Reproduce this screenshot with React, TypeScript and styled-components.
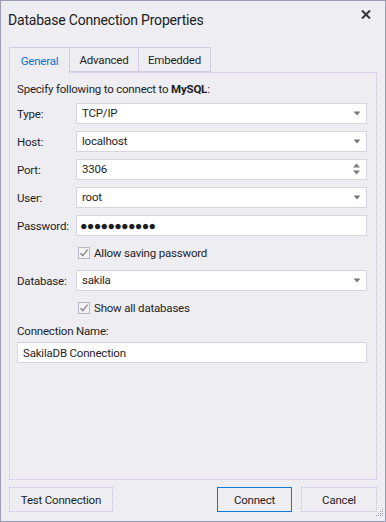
import { FC, ReactNode } from "react";
import styled, { createGlobalStyle } from "styled-components";

const Global = createGlobalStyle`
  html, body {
    margin: 0;
    padding: 0;
    background: #eeedf2;
  }
  body {
    font-family: Roboto, "Noto Sans", sans-serif;
    font-size: 11.5px;
    letter-spacing: -0.2px;
    color: #1e1e1e;
  }
`;

const Window = styled.div`
  width: 386px;
  height: 522px;
  box-sizing: border-box;
  border: 1px solid #9c9cb8;
  background: #eeedf2;
  display: flex;
  flex-direction: column;
  position: relative;
`;

const TitleBar = styled.div`
  height: 46px;
  display: flex;
  justify-content: space-between;
  align-items: flex-start;
  padding: 11px 14px 0 7px;
  box-sizing: border-box;

  h1 {
    margin: 0;
    font-size: 14px;
    font-weight: 400;
    color: #202020;
  }
`;

const Close = styled.button`
  border: 0;
  background: none;
  padding: 0;
  margin-top: -2px;
  width: 10px;
  height: 9px;
  display: flex;
  cursor: pointer;
`;

const Tabs = styled.div`
  display: flex;
  padding-left: 8px;
  height: 26px;
  box-sizing: border-box;
  position: relative;
  z-index: 1;
`;

const Tab = styled.div<{ $active?: boolean; $w: number }>`
  width: ${({ $w }) => $w}px;
  box-sizing: border-box;
  display: flex;
  align-items: center;
  justify-content: center;
  border: 1px solid #d3cbe0;
  border-left-width: ${({ $active }) => ($active ? "1px" : "0")};
  border-bottom-color: ${({ $active }) => ($active ? "#eeedf2" : "#d3cbe0")};
  background: #eeedf2;
  color: ${({ $active }) => ($active ? "#0a73cf" : "#1e1e1e")};
  height: ${({ $active }) => ($active ? "26px" : "25px")};
  padding-top: 1px;
`;

const Panel = styled.div`
  margin: -1px 8px 0 8px;
  height: 408px;
  box-sizing: border-box;
  border: 1px dotted #c9bfd8;
  padding: 7px 9px 0 7px;
  display: flex;
  flex-direction: column;
`;

const Intro = styled.div`
  height: 19px;
  line-height: 18px;
  b {
    font-weight: 700;
  }
`;

const Row = styled.div`
  display: grid;
  grid-template-columns: 59px 1fr;
  align-items: center;
  height: 28px;
`;

const Label = styled.label`
  padding-top: 2px;
`;

const Field = styled.div`
  height: 21px;
  box-sizing: border-box;
  border: 1px solid #d7d3e0;
  background: #ffffff;
  display: flex;
  align-items: center;
  padding: 0 5px 0 5px;
`;

const FieldText = styled.span<{ $dots?: boolean }>`
  flex: 1;
  letter-spacing: ${({ $dots }) => ($dots ? "-0.7px" : "-0.2px")};
  font-size: ${({ $dots }) => ($dots ? "12.5px" : "11.5px")};
  margin-left: ${({ $dots }) => ($dots ? "-2px" : "0")};
`;

const CheckRow = styled.div`
  display: flex;
  align-items: center;
  gap: 4px;
  padding-left: 61px;
  height: 27px;
`;

const Box = styled.span`
  width: 12px;
  height: 12px;
  box-sizing: border-box;
  border: 1px solid #b8b8c4;
  background: #f4f4f7;
  display: flex;
  align-items: center;
  justify-content: center;
`;

const NameLabel = styled.div`
  margin-top: 3px;
  height: 18px;
`;

const Footer = styled.div`
  display: flex;
  align-items: center;
  padding: 7px 8px 0 8px;
  gap: 9px;
`;

const Button = styled.button<{ $primary?: boolean; $w: number }>`
  width: ${({ $w }) => $w}px;
  height: 25px;
  box-sizing: border-box;
  font-family: inherit;
  font-size: 11.5px;
  letter-spacing: -0.2px;
  color: #1e1e1e;
  background: #eeedf2;
  border: 1px ${({ $primary }) => ($primary ? "solid #0a78d4" : "dotted #c9bfd8")};
  padding: 0;
  &:first-child {
    margin-right: auto;
  }
`;

const Grip = styled.div`
  position: absolute;
  right: 1px;
  bottom: 1px;
`;

const Arrow: FC = () => (
  <svg width="8" height="5" viewBox="0 0 8 5">
    <path d="M0.5 0.5h7L4 4.5z" fill="#7a7a7a" />
  </svg>
);

const Spin: FC = () => (
  <svg width="9" height="14" viewBox="0 0 9 14">
    <path d="M1 5.5h7L4.5 1.5z" fill="#7a7a7a" />
    <path d="M1 8.5h7L4.5 12.5z" fill="#7a7a7a" />
  </svg>
);

const Check: FC<{ children: ReactNode }> = ({ children }) => (
  <CheckRow>
    <Box>
      <svg width="10" height="10" viewBox="0 0 10 10">
        <path d="M1.5 5.2 L3.8 7.6 L8.6 1.6" fill="none" stroke="#8a8a8a" strokeWidth="1.4" />
      </svg>
    </Box>
    <span>{children}</span>
  </CheckRow>
);

type FieldRowProps = {
  label: string;
  value: string;
  kind?: "combo" | "spin" | "plain";
  dots?: boolean;
};

const FieldRow: FC<FieldRowProps> = ({ label, value, kind = "combo", dots }) => (
  <Row>
    <Label>{label}</Label>
    <Field>
      <FieldText $dots={dots}>{value}</FieldText>
      {kind === "combo" && <Arrow />}
      {kind === "spin" && <Spin />}
    </Field>
  </Row>
);

const App: FC = () => {
  return (
    <>
      <Global />
      <Window>
        <TitleBar>
          <h1>Database Connection Properties</h1>
          <Close aria-label="Close">
            <svg width="10" height="9" viewBox="0 0 10 9">
              <path d="M1 0.5 L9 8.5 M9 0.5 L1 8.5" stroke="#333" strokeWidth="2" />
            </svg>
          </Close>
        </TitleBar>
        <Tabs>
          <Tab $active $w={61}>General</Tab>
          <Tab $w={69}>Advanced</Tab>
          <Tab $w={72}>Embedded</Tab>
        </Tabs>
        <Panel>
          <Intro>
            Specify following to connect to <b>MySQL</b>:
          </Intro>
          <FieldRow label="Type:" value="TCP/IP" />
          <FieldRow label="Host:" value="localhost" />
          <FieldRow label="Port:" value="3306" kind="spin" />
          <FieldRow label="User:" value="root" />
          <FieldRow label="Password:" value="●●●●●●●●●●●" kind="plain" dots />
          <Check>Allow saving password</Check>
          <FieldRow label="Database:" value="sakila" />
          <Check>Show all databases</Check>
          <NameLabel>Connection Name:</NameLabel>
          <Field>
            <FieldText>SakilaDB Connection</FieldText>
          </Field>
        </Panel>
        <Footer>
          <Button $w={104}>Test Connection</Button>
          <Button $primary $w={75}>Connect</Button>
          <Button $w={76}>Cancel</Button>
        </Footer>
        <Grip>
          <svg width="8" height="8" viewBox="0 0 8 8" fill="#9a9aa8">
            <rect x="6" y="0" width="1" height="1" />
            <rect x="4" y="2" width="1" height="1" />
            <rect x="6" y="2" width="1" height="1" />
            <rect x="2" y="4" width="1" height="1" />
            <rect x="4" y="4" width="1" height="1" />
            <rect x="6" y="4" width="1" height="1" />
            <rect x="0" y="6" width="1" height="1" />
            <rect x="2" y="6" width="1" height="1" />
            <rect x="4" y="6" width="1" height="1" />
            <rect x="6" y="6" width="1" height="1" />
          </svg>
        </Grip>
      </Window>
    </>
  );
};

export default App;
